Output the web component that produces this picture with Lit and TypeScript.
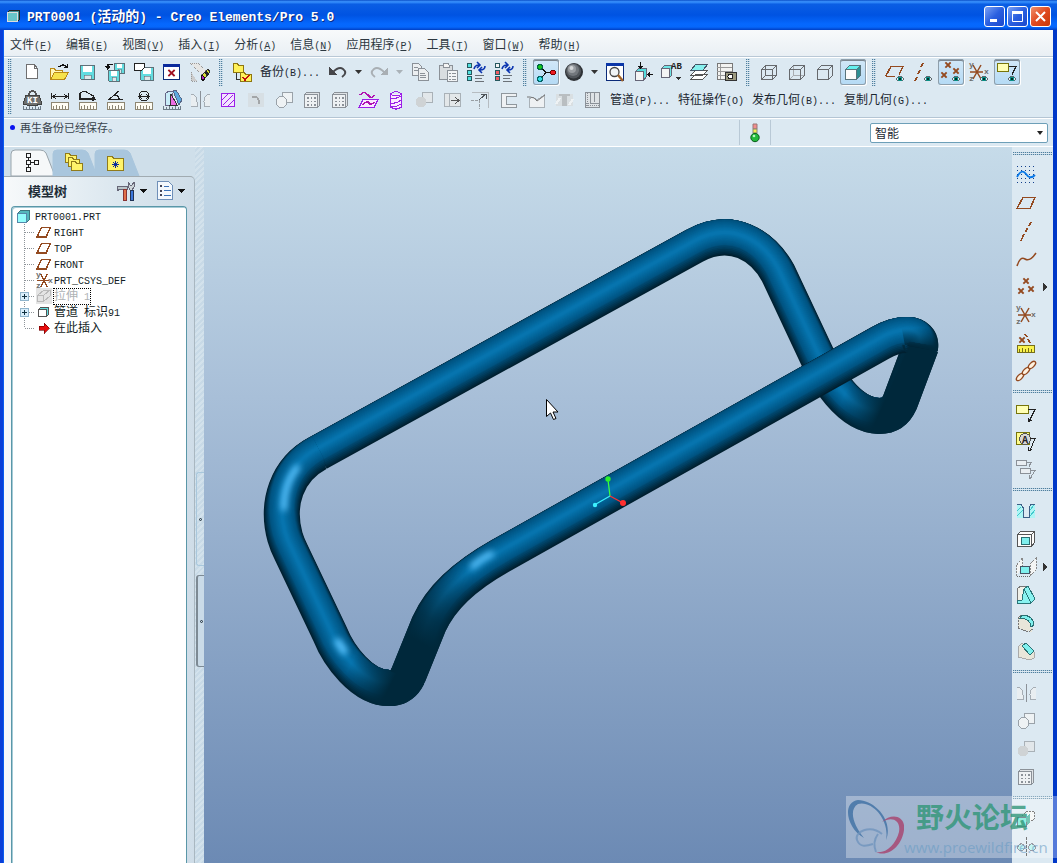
import { LitElement, html, svg, css, nothing } from "lit";
import { customElement, property } from "lit/decorators.js";
import { classMap } from "lit/directives/class-map.js";

/* ---------- shared glyph fragments ---------- */
const B = "#944a20";
const G = "#8b9198";
const P = "#9b1fe8";

const cross = (x: number, y: number, c = B, r = 2) =>
  svg`<path d="M${x - r} ${y - r}l${2 * r} ${2 * r}M${x + r} ${y - r}l${-2 * r} ${2 * r}" stroke=${c} stroke-width="1.800" stroke-linecap="square" fill="none" shape-rendering="auto"/>`;
const letter = (x: number, y: number, t: string, c = "#6c6c6c", s = 8) =>
  svg`<text x=${x} y=${y} font-family="Liberation Mono, monospace" font-size=${s} font-weight="700" fill=${c}>${t}</text>`;
const eye = svg`<path d="M10 17q5-6 10 0q-5 5-10 0z" fill="#5d6a70"/><path d="M11 17q4-3 8 0q-4 3-8 0z" fill="#e8eef0"/><circle cx="15" cy="17" r="2.200" fill="#0c8f86"/><circle cx="15" cy="17" r="1" fill="#00302c"/>`;
const ruler = (fill = "#fffdf4", stroke = "#8d8672") =>
  svg`<path d="M1.500 12.500h17v7h-17z" fill=${fill} stroke=${stroke}/><path d="M3.500 19v-3M6.500 19v-4M9.500 19v-3M12.500 19v-4M15.500 19v-3" stroke=${stroke}/>`;
const scale = svg`<path d="M1.500 16v4M1 19.500h18M4.500 17v3M7.500 16v4M10.500 17v3M13.500 16v4M16.500 17v3M18.500 16v4" stroke="#6d7c88" fill="none"/>`;
const disk = (x: number, y: number, s: number) =>
  svg`<path d="M${x + 0.5} ${y + 0.5}h${s}v${s}h${1 - s}l-1-1z" fill="#62dce0" stroke="#5e7078"/><path d="M${x + 3} ${y + 1}h${s - 5}v${s / 2 - 1}h${5 - s}z" fill="#fff"/><path d="M${x + 4} ${y + s - 4}h${s - 7}v4h${7 - s}z" fill="#dfe7ea" stroke="#5e7078" stroke-width=".6"/>`;
const cube = (stroke: string, front: string, top: string, side: string) =>
  svg`<path d="M2.500 7.500l4-4h11v10l-4 4h-11z" fill=${top} stroke=${stroke}/><path d="M2.500 7.500h11v10h-11z" fill=${front} stroke=${stroke}/><path d="M13.500 7.500l4-4v10l-4 4z" fill=${side} stroke=${stroke}/>`;
const csys = (ox: number, oy: number) =>
  svg`<path d="M${ox - 7} ${oy}h13M${ox - 4} ${oy - 7}l8 14M${ox + 4} ${oy - 7}l-8 14" stroke=${B} stroke-width="1.500" fill="none" shape-rendering="auto"/>`;
const grid = svg`<path d="M2.500 4.500l2-2h13v13l-2 2h-13z" fill="#dfe3e6" stroke=${G}/><path d="M2.500 4.500h13v13h-13z" fill="#eef1f3" stroke=${G}/><path d="M5 8h9M5 11.500h9M5 15h9" stroke=${G} stroke-width="1.500" stroke-dasharray="1.500 2"/>`;
const mirrorGrey = svg`<path d="M10.500 1v18" stroke=${G}/><path d="M1 4.500q6 0 6 7v5H1M20 4.500q-6 0-6 7v5h6" fill="#e9eef1" stroke="#a5adb4"/>`;
const merge = svg`<path d="M8.500 2.500h10v10h-10z" fill="#eef2f4" stroke="#9aa2a9"/><circle cx="7.500" cy="12" r="5.500" fill="#eef2f4" stroke="#9aa2a9"/>`;
const mergeFilled = svg`<path d="M8.500 2.500h10v10h-10z" fill="#e2e7ea" stroke="#a9b1b7"/><circle cx="7" cy="12" r="5.500" fill="#cfd3d5"/>`;
const treeBox = (color: string, first = color) =>
  svg`<path d="M1.500 1.500h4v4h-4z" fill=${first} stroke="#27585f"/><path d="M1.500 8.500h4v4h-4zM1.500 14.500h4v4h-4z" fill=${color} stroke="#27585f"/><path d="M9 13.500h9M9 16.500h7M9 19.500h9" stroke="#6b7177"/><path d="M8 7q1-4 5-4M11 0l3 3-3 3M19 4q0 4-5 4M16 5l-3 3 3 3" stroke="#0b35b0" stroke-width="1.600" fill="none" shape-rendering="auto"/>`;
const note = svg`<path d="M.5 3.500h12v8h-12z" fill="#ffffb4" stroke="#77750c" stroke-width="1.200"/>`;
const link = (x: number, y: number) =>
  svg`<ellipse cx=${x} cy=${y} rx="4.500" ry="2.300" transform=${`rotate(-45 ${x} ${y})`} fill="#fff2df" stroke=${B} stroke-width="1.400"/>`;

const icons: Record<string, unknown> = {
  "new": svg`<path d="M4.500 2.500h8l3 4v10h-11z" fill="#fff" stroke="#6f6f70"/><path d="M12.500 2.500v4h3" fill="none" stroke="#6f6f70"/>`,
  open: svg`<path d="M.5 17V6.500h4l1 2h7v3" fill="#fff7b8" stroke="#b98a17"/><path d="M.5 17.500l4-7h14l-4 7z" fill="#f6e24c" stroke="#b98a17"/><path d="M9 5q4-4 8 0M17.500 1.500v4h-4" fill="none" stroke="#111" stroke-width="1.400"/>`,
  save: disk(2, 3, 14),
  saveas: svg`${disk(8, 1, 10)}${disk(2, 8, 11)}<path d="M7 2.500H2v3M0 4l2 3 2-3" stroke="#111" fill="none" stroke-width="1.400"/>`,
  backup: svg`${disk(6, 5, 13)}<path d="M.5 1.500h10v4l-3 3h-7z" fill="#fff" stroke="#222"/>`,
  closewin: svg`<path d="M1.500 2.500h16v15h-16z" fill="#fff" stroke="#0b2a78"/><path d="M1 2h17v3H1z" fill="#0b2a9c"/>${cross(9.5, 11, "#a01020", 2.5)}`,
  erase: svg`<path d="M0 1h8l9 9-4 4z" fill="#e6e6e4" stroke="#999" stroke-dasharray="1 1"/><path d="M1 10v9h6" fill="#ccc" stroke="#999" stroke-dasharray="1 1"/><path d="M18 7l2 3-5 6-3-3z" fill="#d7dd3a" stroke="#333"/><path d="M12 13l3 3-2 3-2-3z" fill="#b322b8" stroke="#111"/><path d="M16 9l3 3-2 2-3-3z" fill="#222"/>`,
  folders: svg`<path d="M1.500 1.500h4l1 2h5v7h-10z" fill="#fff15a" stroke="#8f7610"/><path d="M4 11v6h4" stroke="#333" fill="none"/><path d="M8.500 10.500h4l1 2h6v7h-11z" fill="#fff15a" stroke="#8f7610"/><path d="M11 15l2 3 4-5" stroke="#c01010" fill="none" stroke-width="1.600"/>`,
  undo: svg`<path d="M1 5v8h8z" fill="#46464a"/><path d="M5 10q6-6 10-3q5 4-1 8" stroke="#46464a" stroke-width="2" fill="none" shape-rendering="auto"/>`,
  redo: svg`<path d="M19 5v8h-8z" fill="#a9afb4"/><path d="M15 10q-6-6-10-3q-5 4 1 8" stroke="#a9afb4" stroke-width="2" fill="none" shape-rendering="auto"/>`,
  copy: svg`<path d="M2.500 1.500h6l3 3v9h-9z" fill="#eceff1" stroke=${G}/><path d="M8.500 6.500h6l4 4v8h-10z" fill="#eceff1" stroke=${G}/><path d="M4 5.500h4M4 8.500h4M10 11.500h5M10 13.500h6M10 15.500h6" stroke=${G}/>`,
  paste: svg`<path d="M1.500 3.500h13v14h-13z" fill="#d9dde0" stroke=${G}/><path d="M5 3l1-2h4l1 2v2H5z" fill="#f4f4f4" stroke=${G}/><path d="M9.500 8.500h10v11h-10z" fill="#f2f4f6" stroke=${G}/><path d="M11 11.500h2M14 11.500h4M11 14.500h2M14 14.500h4M11 17.500h2M14 17.500h4" stroke=${G}/>`,
  regen: treeBox("#4fe0de"),
  regenman: treeBox("#ef5b62", "#f4f4f4"),
  spin: svg`<path d="M5 5l5 5.500h7M10 10.500l-5 6" stroke="#111" fill="none" stroke-width="1.200"/><circle cx="4" cy="5" r="2.400" fill="#13c51b" stroke="#064"/><circle cx="17" cy="10.500" r="2.400" fill="#ee1c24" stroke="#700"/><circle cx="4" cy="17" r="2.400" fill="#34dce4" stroke="#066"/>`,
  sphere: svg`<g shape-rendering="auto"><circle cx="10" cy="10" r="9" fill="#2e3236"/><circle cx="9.500" cy="9" r="7.600" fill="#51565b"/><circle cx="9" cy="8" r="6" fill="#72777c"/><circle cx="8" cy="7" r="4" fill="#9a9ea2"/><circle cx="7.500" cy="6" r="2" fill="#d4d6d8"/></g>`,
  refit: svg`<path d="M1.500 1.500h17v17h-17z" fill="#fff" stroke="#0b2a78"/><path d="M1 1h18v3H1z" fill="#0b36a8"/><g shape-rendering="auto"><circle cx="9.500" cy="10" r="4.500" fill="#f1f5f7" stroke="#444" stroke-width="1.300"/><path d="M13 13l5 6" stroke="#a0642a" stroke-width="2.400"/></g>`,
  reorient: svg`<path d="M2.500 9.500l3-3h8v8l-3 4h-8z" fill="#56dede" stroke="#667"/><path d="M2.500 9.500h8v9h-8z" fill="#f4f4f4" stroke="#667"/><path d="M7.500 0v6M20 12.500h-6" stroke="#111"/><path d="M4.500 4h6l-3 3zM16.500 9.500v6l-3-3z" fill="#111"/>`,
  views: svg`<path d="M.5 6.500l3-3h7v10l-2 2h-8z" fill="#6fe6e6" stroke="#667"/><path d="M.5 6.500h8v9h-8z" fill="#f4f4f4" stroke="#667"/>${letter(10, 7, "AB", "#222", 9)}<path d="M14 15h6l-3 3z" fill="#333"/>`,
  layers: svg`<path d="M2 17l5-5h12l-5 5zM2 13l5-5h12l-5 5z" fill="#fff" stroke="#555"/><path d="M2 8l5-6h12l-5 6z" fill="#86f0ee" stroke="#456"/>`,
  viewmgr: svg`<path d="M.5 1.500h15v16H.5z" fill="#f3f3f1" stroke="#777"/><path d="M3.500 2v15M0 5.500h15M0 9.500h15M0 13.500h15" stroke="#999"/><path d="M8 10.500h11v8H8z" fill="#9c9a80" stroke="#333"/><circle cx="13.500" cy="14.500" r="2.500" fill="#fff" stroke="#222"/>`,
  wire: svg`<path d="M2.500 7.500h11v10h-11zM6.500 3.500h11v10h-11zM2.500 7.500l4-4M13.500 7.500l4-4M2.500 17.500l4-4M13.500 17.500l4-4" fill="none" stroke="#66696d"/>`,
  hidden: svg`<path d="M6.500 3.500v10h11M6.500 13.500l-4 4" stroke="#a9adb2" fill="none"/><path d="M2.500 7.500h11v10h-11zM2.500 7.500l4-4h11v10l-4 4M13.500 7.500l4-4" fill="none" stroke="#66696d"/>`,
  nohidden: svg`<path d="M2.500 7.500h11v10h-11zM2.500 7.500l4-4h11v10l-4 4M13.500 7.500l4-4" fill="none" stroke="#66696d"/>`,
  shaded: cube("#58747c", "#fcfcfb", "#62f0ee", "#2d8f92"),
  planeeye: svg`<path d="M.5 14.500L6 4.500h12l-4 8M.5 14.500h9" fill="none" stroke=${B} stroke-width="1.500"/>${eye}`,
  axiseye: svg`<path d="M10 1l-2 4M7 8l-2 4M4 15l-2 4" stroke=${B} stroke-width="1.800"/>${eye}`,
  pointeye: svg`${cross(7, 3)}${cross(15, 9)}${cross(3, 13)}${eye}`,
  csyseye: svg`${csys(8, 10)}${letter(0, 5, "y")}${letter(15, 12, "x")}${letter(0, 19, "z")}${eye}`,
  noteeye: svg`<path d="M.5 1.500h11v8h-11z" fill="#ffffb4" stroke="#77750c" stroke-width="1.200"/><path d="M12 4.500h7l-4 8" stroke="#222" fill="none"/>${eye}`,

  weight: svg`<path d="M4 5h13l3 9q-10 3-19 0z" fill="#6e706f" stroke="#3f4141"/><path d="M7 5q0-4 3.500-4T14 5" fill="none" stroke="#555" stroke-width="1.600"/>${letter(5, 13, "KI", "#fff", 9)}${scale}`,
  distance: svg`<path d="M1.500 3v6M18.500 3v6M2 6.500h16M6 4L3 6.500 6 9M14 4l3 2.500L14 9" stroke="#222" fill="none"/>${ruler()}`,
  area: svg`<path d="M2 9V3q5-3 8 0q7 3 7 6zM2 9h15M14 7l3 2-3 2" stroke="#222" fill="none" stroke-width="1.200"/>${ruler()}`,
  angle: svg`<path d="M13 1L3 9.500h14M9 5q4 1 4 4" stroke="#222" fill="none" stroke-width="1.200"/>${ruler()}`,
  diameter: svg`<circle cx="10" cy="6" r="5" fill="none" stroke="#222"/><path d="M4 6.500h12M8 4.500L5 6.500l3 2M12 4.500l3 2-3 2" stroke="#222" fill="none"/>${ruler()}`,
  section: svg`<path d="M3 4l4-3h6l-3 3v11H3z" fill="#c9ecf8" stroke="#668"/><path d="M9 4l6 11H8z" fill="#ee6ee4" stroke="#333"/><path d="M11 1l3-1 6 10-3 5z" fill="#5aa9dd" stroke="#568"/>${scale}`,
  mirror: mirrorGrey,
  hatch: svg`<path d="M3.500 3.500h13v13h-13z" fill="#f3e4ff" stroke=${P} stroke-width="1.400"/><path d="M4 10l6-6M5 15L15 5M10 16l6-6" stroke=${P} shape-rendering="auto"/>`,
  blend: svg`<path d="M2 3h16v14H2z" fill="#d7dfe4"/><path d="M6 7q7-2 7 7" stroke="#a3a6a8" stroke-width="2" fill="none"/>`,
  merge,
  grid,
  surf: svg`<path d="M2 5q4-5 8 0t6 0" stroke="#b012b0" fill="none" stroke-width="1.500"/><path d="M5 9.500h15l-4 8H1z" fill="#fbe9ff" stroke=${P} stroke-width="1.300"/><path d="M5 15q4-5 6-2t5-1" stroke="#b012b0" fill="none" stroke-width="1.500"/>`,
  cyl: svg`<path d="M4.500 4v13q6 4 11 0V4" fill="#fbe9ff" stroke=${P} stroke-width="1.300"/><path d="M4.500 4q5.500-5 11 0q-5.500 4-11 0zM5 9q5 0 10-3M5 13q6 1 10-3M5 17q6 0 10-3" fill="none" stroke=${P}/>`,
  mergef: mergeFilled,
  extend: svg`<path d="M2 3.500h16v13H2z" fill="#e3e7e9" stroke="#a9b1b7"/><path d="M7.500 4v13" stroke="#a9b1b7"/><path d="M9 10.500h7M13 7l4 3.500-4 3.500" stroke="#555" fill="none"/>`,
  offset: svg`<path d="M2 2.500h16.500V18" fill="none" stroke="#b6bcc1" stroke-width="1.500"/><path d="M1 10h8v9" stroke="#999fa4" fill="none" stroke-dasharray="3 1"/><path d="M9 10l7-6M11 4h5v5" stroke="#4f555a" fill="none"/>`,
  thick: svg`<path d="M3.500 3.500h15v3h-10v8h10v3h-15z" fill="#eef1f3" stroke="#8f979d"/>`,
  solid: svg`<path d="M3.500 17.500V9q4-3 7 1l8-5v12.500z" fill="#eef1f3" stroke="#a9b1b7"/><path d="M1 7h3q5 0 7 4l8-6" stroke="#777" fill="none" shape-rendering="auto"/>`,
  hole: svg`<path d="M2 4h17v12H2z" fill="#d9dfe2"/><path d="M2 14l4-6M15 15l4-6" stroke="#eef2f4" stroke-width="2"/><path d="M5 4h11v2h-3v10H8V6H5z" fill="#b9bec1"/>`,
  rib: svg`<path d="M3.500 2.500h14v15h-14z" fill="#dfe3e6" stroke=${G}/><path d="M8.500 3v10h9M12.500 3v9" stroke=${G} fill="none"/><path d="M4 13h4M4 15h13M5.500 3v14" stroke=${G} stroke-dasharray="1 1"/>`,

  sketch: svg`<path d="M1 1.500h18M1 5.500h18M1 9.500h18M1 13.500h18M1 17.500h18" stroke="#123f8c" stroke-dasharray="1 3"/><path d="M1 12q5-9 9-3t9 1" stroke="#0878e8" stroke-width="1.800" fill="none" shape-rendering="auto"/>`,
  plane: svg`<path d="M1 15.500L7 4.500h12l-5 11z" fill="none" stroke=${B} stroke-width="1.500"/>`,
  axis: svg`<path d="M15 1l-2 4M11.500 7l-2 4M8 13l-3 7" stroke=${B} stroke-width="1.600"/>`,
  curve: svg`<path d="M1 17q3-10 8-7q5 3 11-6" fill="none" stroke=${B} stroke-width="1.500" shape-rendering="auto"/>`,
  points: svg`${cross(10, 4)}${cross(5, 14)}${cross(15, 12)}`,
  csys: svg`${csys(9, 10)}${letter(0, 5, "y")}${letter(15, 12, "x")}${letter(0, 19, "z")}`,
  ruler: svg`${cross(6, 7)}<path d="M9 1l2 3M12 6l2 4" stroke=${B} stroke-width="1.500"/>${ruler("#faf34c", "#77701a")}`,
  chain: svg`<g shape-rendering="auto">${link(4, 16)}${link(10, 10)}${link(16, 4)}</g>`,
  note1: svg`<path d="M.5 2.500h12v8H.5z" fill="#ffffb4" stroke="#77750c"/><path d="M12 6.500h7l-6 12M12 15v4l4-2" stroke="#222" fill="none"/>`,
  note2: svg`<path d="M.5 1.500h13v12H.5z" fill="#fffc8c" stroke="#77750c"/><circle cx="9" cy="8" r="5.500" fill="#d7d7d3" stroke="#555"/>${letter(6, 12, "A", "#222", 10)}<path d="M14 7.500h5l-5 12M12 16v4l4-2" stroke="#222" fill="none"/>`,
  note3: svg`<path d="M.5 1.500h10v5H.5zM4.500 9.500h10v5h-10z" fill="#e9eef2" stroke=${G}/><path d="M11 3.500h4l-2 4M15 11.500h4l-5 8M13 16v4l3-2" stroke=${G} fill="none"/>`,
  hole2: svg`<path d="M1 4h4l3 3v10H1zM19 4h-4l-2 3v10h6z" fill="#aef5f5"/><path d="M1 10l4-4M1 15l6-6M14 15l5-6M14 9l4-5" stroke="#41c8cc"/><path d="M1 3.500h4l2 3v10h6v-10l2-3h4" stroke="#3c5f86" fill="none"/>`,
  shell: svg`<path d="M1.500 5.500l3-3h14v11l-3 4h-14z" fill="#fdfdfc" stroke="#555"/><path d="M1.500 5.500h14v12h-14M15.500 5.500l3-3" fill="none" stroke="#555"/><path d="M5 8h8v7H5z" fill="#7ff0ee" stroke="#2a6f73"/>`,
  ribs: svg`<path d="M.5 19V8l6-7v8M20 1l-6 6v12l6-6z" fill="#f4f5f4" stroke="#888" stroke-dasharray="2 1"/><path d="M4 9h9v7H4z" fill="#7ff0ee" stroke="#456"/><path d="M1 19.500h13" stroke="#666" stroke-dasharray="1 1"/>`,
  draft: svg`<path d="M1 4l4-3h6l-3 3v12H1z" fill="#f0f0e8" stroke="#777"/><path d="M8 4l4-3 7 13-4 4H1v-3h5z" fill="#89f3f1" stroke="#2a7478"/><path d="M8 4l7 14" stroke="#2a7478"/>`,
  round: svg`<path d="M2 5l4-3 9 8 1 5v4l-14-4z" fill="#e8e6da"/><path d="M2 15V5l4-3M2 15l11 4 5-4" stroke="#777" fill="none" stroke-dasharray="2 1"/><path d="M6 2q11 0 12 10l-3 2Q14 5 4 5z" fill="#7ff0ee" stroke="#2a6f73"/>`,
  chamfer: svg`<path d="M2 6l4-4 12 9v6l-4 2-12-3z" fill="#e8e6da" stroke="#aaa"/><path d="M6 5l4-3 8 8-4 4z" fill="#7ff0ee" stroke="#2a6f73"/>`,
  copygeom: svg`<path d="M6 7l5-5h7v8l-6 4" fill="#f2f5f4" stroke="#444" stroke-dasharray="2 1"/><path d="M1.500 8.500h9v9h-9z" fill="#5fe8d2" stroke="#456"/><path d="M10 8l4-3v8l-3 4z" fill="#2fa890"/>`,
  shrink: svg`<path d="M10.500 0v20" stroke="#333" stroke-dasharray="3 1"/><path d="M1 11q4-8 8-1q-3 7-8 1zM20 11q-4-8-8-1q3 7 8 1z" fill="#a7f4ee" stroke="#667"/>`,
};

const latin = (t: string, key = "") =>
  t.split(/([\x20-\x7e]+)/).filter(Boolean).map((p) => {
    if (!/[\x20-\x7e]/.test(p[0])) return p;
    const i = key ? p.indexOf(key) : -1;
    return html`<span class="en">${i < 0 ? p : html`${p.slice(0, i)}<u>${key}</u>${p.slice(i + 1)}`}</span>`;
  });

const base = css`
  * { box-sizing: border-box; }
  .en { font-family: "Liberation Mono", monospace; font-size: 10px; white-space: pre; }
  button { font: inherit; color: inherit; border: 0; background: none; padding: 0; margin: 0; }
`;

/* ---------- toolbar button ---------- */
@customElement("tool-button")
class ToolButton extends LitElement {
  @property() icon = "";
  @property() label = "";
  @property({ type: Boolean }) pressed = false;
  @property({ type: Boolean }) flyout = false;
  static styles = [base, css`
    :host { display: block; flex: none; }
    .row { display: flex; align-items: center; }
    .b { width: 26px; height: 26px; margin: 1px; display: grid; place-items: center; border-radius: 3px; }
    .on { background: linear-gradient(#d3e8f8, #b4daf5); box-shadow: inset 0 0 0 1px #8f9fab, inset 0 2px #7c8791, 1px 1px #fff; }
    svg { display: block; shape-rendering: crispEdges; overflow: visible; }
    .fly { margin-left: 3px; }
  `];
  render() {
    return html`<div class="row">
      <button class=${classMap({ b: true, on: this.pressed })} aria-label=${this.label || this.icon} aria-pressed=${this.pressed}>
        <svg width="20" height="20" viewBox="0 0 20 20" fill="none">${icons[this.icon]}</svg>
      </button>
      ${this.flyout ? html`<svg class="fly" width="5" height="8"><path d="M0 0l5 4-5 4z" fill="#333" /></svg>` : nothing}
    </div>`;
  }
}

/* ---------- model tree ---------- */
interface Node { icon: string; text: string; state?: string; plus?: boolean; }
const nodes: Node[] = [
  { icon: "plane", text: "RIGHT" },
  { icon: "plane", text: "TOP" },
  { icon: "plane", text: "FRONT" },
  { icon: "csys", text: "PRT_CSYS_DEF" },
  { icon: "extrude", text: "拉伸 1", state: "dim", plus: true },
  { icon: "pipe", text: "管道 标识91", plus: true },
  { icon: "insert", text: "在此插入" },
];
const treeIcons: Record<string, unknown> = {
  plane: svg`<path d="M1 13L5.500 3.500h9L10 13z" fill="none" stroke=${B} stroke-width="1.500"/>`,
  csys: svg`<path d="M1 8.500h12M5 2l6 13M11 2L5 15" stroke=${B} stroke-width="1.400"/>${letter(0, 5, "y")}${letter(12, 11, "x")}${letter(0, 16, "z")}`,
  extrude: svg`<path d="M0 0h16v16H0z" fill="#e4e4e4"/><path d="M1.500 7.500h6v6h-6zM2 7l6-5h6v6l-6 5M8 7l6-5" stroke="#b9b9b9" fill="none"/>`,
  pipe: svg`<path d="M2.500 5.500l2-2h8v7l-2 2h-8z" fill="#62dede" stroke="#555"/><path d="M2.500 5.500h8v7h-8z" fill="#fff" stroke="#555"/>`,
  insert: svg`<path d="M3 6h5V2.500L13.500 8 8 13.500V10H3z" fill="#e80c0c" stroke="#600" stroke-width=".6"/>`,
  root: svg`<path d="M.5 4.500l3-3h9v9l-3 3h-9z" fill="#53b8bc" stroke="#3c767c"/><path d="M.5 4.500h9v9h-9z" fill="#93fdfc" stroke="#58a"/>`,
};

@customElement("model-tree")
class ModelTree extends LitElement {
  static styles = [base, css`
    :host { display: flex; flex-direction: column; width: 191px; flex: none; font: 12px "Noto Sans CJK SC", sans-serif; color: #111c24; }
    svg { display: block; shape-rendering: crispEdges; overflow: visible; }
    .tabs { display: flex; height: 29px; padding: 3px 0 0 7px; }
    .tab { width: 42px; height: 26px; display: grid; }
    .tab svg { grid-area: 1 / 1; }
    .tab .shape { shape-rendering: auto; }
    .body { flex: 1; display: flex; flex-direction: column; border-top: 1px solid #a1abb1; border-right: 1px solid #a9b7c0; border-top-right-radius: 5px; padding: 0 7px; background: linear-gradient(90deg, #f7f9fa, #dbe7ef 60%, #cfdde8); }
    .head { height: 29px; display: flex; align-items: center; gap: 9px; padding: 0 2px 2px 17px; }
    h2 { font-size: 13px; line-height: 16px; margin: 0 auto 0 0; color: #222e38; }
    .head button { display: flex; align-items: center; gap: 4px; }
    .list { flex: 1; margin: 0; padding: 1px 0 0 5px; list-style: none; background: #fff; border: 1px solid #5a97a8; border-bottom: 0; border-radius: 4px 4px 0 0; box-shadow: inset 1px 1px #a6cbd6; }
    .list li { display: flex; align-items: center; height: 16px; line-height: 16px; white-space: nowrap; gap: 3px; }
    .list .node { gap: 2px; }
    .tx { height: 15px; line-height: 12px; }
    .dim { color: #aeb2b5; outline: 1px dotted #000; }
  `];
  render() {
    const folder = (x: number, y: number) => svg`<path d="M${x}.5 ${y}.5h4l1 2h6v7h-11z" fill="#fff36a" stroke="#907b1b"/>`;
    const tab = (fill: string, stroke: string, inner: unknown, name: string) => html`
      <button class="tab" aria-label=${name}>
        <svg class="shape" width="46" height="26"><path d="M0 26V4q0-4 4-4h25q4 0 6 3l9 23z" fill=${fill} stroke=${stroke}/></svg>
        <svg width="42" height="26" fill="none">${inner}</svg>
      </button>`;
    const down = html`<svg width="7" height="4"><path d="M0 0h7L3.500 4z" fill="#111"/></svg>`;
    return html`
      <div class="tabs">
        ${tab("#f6f8f9", "#9aa5ac", svg`<path d="M15.500 3.500h4v4h-4zM15.500 10.500h4v4h-4zM15.500 17.500h4v4h-4zM23.500 10.500h4v4h-4zM17.500 8v2M17.500 15v2M20 12.500h3" stroke="#222"/>`, "模型树")}
        ${tab("#a9c6dd", "#a9c6dd", svg`${folder(12, 3)}${folder(15, 7)}${folder(18, 11)}`, "文件夹")}
        ${tab("#a9c6dd", "#a9c6dd", svg`<path d="M12.500 6.500h5l1 2h10v12h-16z" fill="#fff36a" stroke="#907b1b"/><path d="M20.500 11v7M17 14.500h7M18 12l5 5M23 12l-5 5" stroke="#0b2a9c"/>`, "收藏夹")}
      </div>
      <div class="body">
        <div class="head">
          <h2>模型树</h2>
          <button aria-label="设置"><svg width="19" height="20"><path d="M0 5h10v3H3l-3 2z" fill="#b9c4c8" stroke="#667"/><path d="M6 8h3v11H6z" fill="#e0704a" stroke="#833"/><path d="M11 1l2 3h2l2-3 1 4-3 4h-2l-2-4z" fill="#ccd4d8" stroke="#667"/><path d="M13 9h3v10h-3z" fill="#3d78dc" stroke="#235"/></svg>${down}</button>
          <button aria-label="显示"><svg width="18" height="20" fill="none"><path d="M1.500.5h11l4 4v14h-15z" fill="#f3f8fd" stroke="#6f8fb8"/><path d="M4 5h2M4 9.500h2M4 14h2" stroke="#445" stroke-width="2"/><path d="M7.500 5.500h5M7.500 9.500h7M7.500 14.500h7" stroke="#3b72b8"/></svg>${down}</button>
        </div>
        <ul class="list">
          <li><svg width="15" height="15">${treeIcons.root}</svg><span class="tx">${latin("PRT0001.PRT")}</span></li>
          ${nodes.map((n, i) => html`<li class="node">
            <svg width="17" height="16" fill="none">
              <path d=${`M7.500 0v${i === nodes.length - 1 ? 8 : 16}M8 8.500h10`} stroke="#8e9499" stroke-dasharray="1 1"/>
              ${n.plus ? svg`<path d="M3.500 4.500h8v8h-8z" fill="#d8eefc" stroke="#8fb4cc"/><path d="M5 8.500h5M7.500 6v5" stroke="#103040"/>` : nothing}
            </svg>
            <svg width="16" height="16">${treeIcons[n.icon]}</svg>
            <span class="tx ${n.state ?? ""}">${latin(n.text)}</span>
          </li>`)}
        </ul>
      </div>`;
  }
}

/* ---------- shaded model view ---------- */
const BACK = "M318 453L694 246C732 225 763 246 778 273L817 356C826 376 848 415 879 416C890 416 896 411 900 402L921 346";
const LOOP = "M318 453C286 470 276 504 285 537Q287 544 291 552L330 634C338 654 362 690 392 688C401 687 405 682 408 676";
const FRONT = "M408 676L429 624C441 598 463 577 500 556L880 343C899 332 923 331 920 348";

const mix = (a: number[], b: number[], t: number) => `rgb(${a.map((v, i) => Math.round(v + (b[i] - v) * t)).join()})`;
const layers = Array.from({ length: 21 }, (_, i) => {
  const t = i / 20;
  const w = 36 - 33 * t;
  return {
    w,
    dy: -Math.min((36 - w) / 2, 5),
    c: t < 0.35 ? mix([0, 32, 48], [0, 84, 130], t / 0.35) : mix([0, 84, 130], [7, 116, 174], (t - 0.35) / 0.65),
  };
});
const tube = (d: string) => layers.map((l) => svg`<path d=${d} transform=${`translate(0 ${l.dy})`} stroke=${l.c} stroke-width=${l.w}/>`);

@customElement("model-view")
class ModelView extends LitElement {
  static styles = css`
    :host { display: block; flex: 1; min-width: 0; background: linear-gradient(#c6dbe9, #a8bfd8 35%, #6c8ab4); overflow: hidden; }
    svg { display: block; width: 100%; height: 100%; }
  `;
  render() {
    return html`<svg viewBox="204 147 808 716" fill="none" role="img" aria-label="PRT0001">
      <defs>
        <linearGradient id="legL" gradientUnits="userSpaceOnUse" x1="425" y1="645" x2="468" y2="570">
          <stop offset="0" stop-color="#00283b"/><stop offset=".3" stop-color="#00283b" stop-opacity=".8"/><stop offset="1" stop-color="#00283b" stop-opacity="0"/>
        </linearGradient>
        <linearGradient id="turnL" gradientUnits="userSpaceOnUse" x1="352" y1="662" x2="392" y2="682">
          <stop offset="0" stop-color="#00283b" stop-opacity="0"/><stop offset="1" stop-color="#00283b"/>
        </linearGradient>
        <linearGradient id="turnR" gradientUnits="userSpaceOnUse" x1="846" y1="392" x2="882" y2="408">
          <stop offset="0" stop-color="#00283b" stop-opacity="0"/><stop offset="1" stop-color="#00283b"/>
        </linearGradient>
        <linearGradient id="endR" gradientUnits="userSpaceOnUse" x1="910" y1="328" x2="911" y2="350">
          <stop offset="0" stop-color="#00283b" stop-opacity="0"/><stop offset="1" stop-color="#00283b"/>
        </linearGradient>
        <filter id="soft" x="-50%" y="-50%" width="200%" height="200%"><feGaussianBlur stdDeviation="3"/></filter>
      </defs>
      ${tube(BACK)}
      <path d="M817 356C826 376 848 415 879 416C890 416 896 411 900 402L921 346" stroke="url(#turnR)" stroke-width="36"/>
      ${tube(LOOP)}
      <path d="M330 634C338 654 362 690 392 688C401 687 405 682 408 676" stroke="url(#turnL)" stroke-width="36"/>
      ${tube(FRONT)}
      <path d="M407 678L429 624C441 598 463 577 500 556" stroke="url(#legL)" stroke-width="36"/>
      <path d="M903 335C914 333 922 338 920 348" stroke="url(#endR)" stroke-width="36"/>
      <g filter="url(#soft)" stroke="#5cc4ff" stroke-linecap="round">
        <path d="M297 468Q284 484 284 508" stroke-width="6"/>
        <path d="M473 566Q482 558 491 554" stroke-width="6"/>
        <path d="M338 642L344 651" stroke-width="7"/>
      </g>
      <path d="M610 496L608 480" stroke="#3cff3c" stroke-width="1.300"/>
      <path d="M610 496L596 504" stroke="#3cf0ff" stroke-width="1.300"/>
      <path d="M610 496L623 503" stroke="#ff3030" stroke-width="1.300"/>
      <circle cx="608" cy="479" r="2.700" fill="#2cf02c"/><circle cx="595" cy="505" r="2.200" fill="#3cf0ff"/><circle cx="623" cy="503" r="3" fill="#ff3030"/>
      <path d="M546.500 399.500v17l4-3.500 3 6.500 2.500-1-3-6.500h5z" fill="#fff" stroke="#000"/>
    </svg>`;
  }
}

/* ---------- application window ---------- */
const menus: [string, string][] = [["文件", "F"], ["编辑", "E"], ["视图", "V"], ["插入", "I"], ["分析", "A"], ["信息", "N"], ["应用程序", "P"], ["工具", "T"], ["窗口", "W"], ["帮助", "H"]];
const measure = "weight distance area angle diameter section mirror hatch blend merge grid grid surf cyl mergef extend offset thick solid hole rib".split(" ");
const side = [
  "sketch plane axis curve points csys ruler chain".split(" "),
  "note1 note2 note3".split(" "),
  "hole2 shell ribs draft round chamfer".split(" "),
  "mirror merge mergef grid".split(" "),
  "copygeom shrink".split(" "),
];
const btn = (icon: string, pressed = false) => html`<tool-button icon=${icon} ?pressed=${pressed}></tool-button>`;
const drop = (off = false) => html`<svg class="drop" width="7" height="4"><path d="M0 0h7L3.500 4z" fill=${off ? "#aab2b8" : "#333"}/></svg>`;

@customElement("app-root")
class AppRoot extends LitElement {
  static styles = [base, css`
    :host { display: flex; flex-direction: column; height: 100vh; overflow: hidden; position: relative; font: 12px/16px "Noto Sans CJK SC", sans-serif; color: #1b2731; background: #0a3fd8; }
    .title { flex: none; height: 30px; display: flex; align-items: center; gap: 6px; padding: 2px 6px 0 7px; color: #fff; background: linear-gradient(#0b50c8, #3b94ff 6%, #0a5ee4 14%, #0053e2 50%, #0568fe 80%, #0667fb 90%, #003fc4); }
    h1 { flex: 1; margin: 0; font-size: 14px; line-height: 20px; text-shadow: 1px 1px #0a2a80; }
    h1 .en { font-size: 13px; }
    .win { width: 21px; height: 21px; border: 1px solid #fff; border-radius: 3px; background: linear-gradient(135deg, #7ba2f5, #2a5fe0 50%, #1c48cc); margin-left: -4px; display: grid; place-items: center; }
    .close { background: linear-gradient(135deg, #f0906c, #e04a20 50%, #c83808); }
    .frame { flex: 1; min-height: 0; display: flex; flex-direction: column; margin: 0 4px; background: #dce9f2; box-shadow: 4px 0 #0038c8, -1px 0 #0a5cf0; }
    nav { flex: none; height: 27px; display: flex; align-items: center; gap: 14px; padding: 4px 6px 0; background: linear-gradient(#f8fafb, #e9eff4); border-bottom: 1px solid #b9c8d6; color: #2c3740; }
    .tools { flex: none; display: flex; height: 61px; border-bottom: 1px solid #b4c5d4; box-shadow: 0 1px #fff, inset 0 1px #fff; padding: 1px 4px 0; gap: 6px; }
    .rows { display: flex; flex-direction: column; flex: 1; min-width: 0; }
    .row { display: flex; align-items: center; height: 28px; white-space: nowrap; }
    .grip, .hgrip { flex: none; width: 4px; height: 28px; background: repeating-linear-gradient(#dce9f2 0 1px, transparent 1px 2px), repeating-linear-gradient(90deg, #4f7f9e 0 1px, #b8cfdf 1px 2px); }
    .tall { height: 56px; }
    .row .grip { margin: 0 5px; }
    .txt { padding: 0 4px; }
    .drop { flex: none; margin: 0 3px; }
    .status { flex: none; height: 29px; display: flex; align-items: center; padding: 1px 5px 0 6px; border-bottom: 1px solid #fff; }
    .msg { flex: 1; margin: 0 0 11px; display: flex; align-items: center; gap: 5px; color: #38434c; font-size: 11px; }
    .dot { width: 5px; height: 5px; border-radius: 50%; background: #0a14f0; }
    .light { width: 32px; height: 25px; border: solid #b9c9d6; border-width: 0 1px; display: grid; place-items: center; margin-right: 99px; }
    .combo { display: grid; align-items: center; width: 178px; }
    .combo select { grid-area: 1 / 1; appearance: none; width: 100%; height: 20px; margin: 0; padding: 0 4px; font: inherit; color: #1b2731; background: #fff; border: 1px solid #6d9fb8; border-radius: 2px; }
    .combo svg { grid-area: 1 / 1; justify-self: end; margin-right: 5px; pointer-events: none; }
    main { flex: 1; min-height: 0; display: flex; background: #cfdfea; }
    .sash { flex: none; width: 9px; padding-top: 325px; display: flex; flex-direction: column; gap: 9px; background: repeating-linear-gradient(135deg, #d3e2ec 0 2px, #c8dae7 2px 4px); }
    .pull { width: 8px; height: 94px; margin-left: 1px; border: 1px solid #a8c7dc; border-right: 0; border-radius: 3px 0 0 3px; display: grid; place-items: center; }
    .pull i { width: 3px; height: 3px; border-radius: 50%; border: 1px solid #20303c; }
    .dark { height: 92px; border-color: #7d8a94; border-left-width: 2px; background: #cadbe8; }
    aside { flex: none; width: 41px; display: flex; flex-direction: column; background: #dce9f2; }
    .hgrip { width: auto; height: 4px; margin: 4px 1px 6px; }
    .mark { position: absolute; right: 0; bottom: 5px; width: 211px; height: 62px; background: #ffffff55; display: flex; pointer-events: none; }
    .mark svg { flex: none; }
    .words { display: flex; flex-direction: column; font-size: 28px; line-height: 41px; color: #2e9576cc; }
    .words b { padding-left: 12px; }
    .words span { font: 15px/21px "Noto Sans", sans-serif; color: #6a9cc499; }
  `];

  render() {
    return html`
      <header class="title">
        <svg width="14" height="14" shape-rendering="crispEdges"><path d="M.5 3.500l2-2h10v9l-2 2H.5z" fill="#3c8f98" stroke="#222"/><path d="M.5 3.500h10v9H.5z" fill="#68c5ca" stroke="#ddd"/></svg>
        <h1>${latin("PRT0001 (活动的) - Creo Elements/Pro 5.0")}</h1>
        <button class="win" aria-label="最小化"><svg width="13" height="13"><path d="M2 9h7v3H2z" fill="#fff"/></svg></button>
        <button class="win" aria-label="最大化"><svg width="13" height="13"><path d="M1.500 2v9.500h10V2z" fill="none" stroke="#fff"/><path d="M1 1h11v3H1z" fill="#fff"/></svg></button>
        <button class="win close" aria-label="关闭"><svg width="13" height="13"><path d="M2 2l9 9M11 2l-9 9" stroke="#fff" stroke-width="2"/></svg></button>
      </header>
      <div class="frame">
        <nav>${menus.map(([t, k]) => html`<button>${latin(`${t}(${k})`, k)}</button>`)}</nav>
        <div class="tools">
          <div class="grip tall"></div>
          <div class="rows">
            <div class="row">
              ${["new", "open", "save", "saveas", "backup", "closewin", "erase"].map((n) => btn(n))}
              <div class="grip"></div>
              ${btn("folders")}<button class="txt">${latin("备份(B)...")}</button>
              ${btn("undo")}${drop()}${btn("redo")}${drop(true)}${["copy", "paste", "regen", "regenman"].map((n) => btn(n))}
              <div class="grip"></div>
              ${btn("spin", true)}${btn("sphere")}${drop()}${["refit", "reorient", "views", "layers", "viewmgr"].map((n) => btn(n))}
              <div class="grip"></div>
              ${btn("wire")}${btn("hidden")}${btn("nohidden")}${btn("shaded", true)}
              <div class="grip"></div>
              ${btn("planeeye")}${btn("axiseye")}${btn("pointeye", true)}${btn("csyseye")}${btn("noteeye", true)}
            </div>
            <div class="row">
              ${measure.map((n) => btn(n))}
              ${["管道(P)...", "特征操作(O)", "发布几何(B)...", "复制几何(G)..."].map((t) => html`<button class="txt">${latin(t)}</button>`)}
            </div>
          </div>
        </div>
        <div class="status">
          <p class="msg"><span class="dot"></span>再生备份已经保存。</p>
          <div class="light"><svg width="10" height="20"><path d="M3 1h4v5H3z" fill="#f28c8c" stroke="#977"/><path d="M3 6h4v4H3z" fill="#f5ee50" stroke="#887"/><circle cx="5" cy="14.500" r="4.200" fill="#23b93c" stroke="#0a5c1c"/><circle cx="4" cy="13" r="1.300" fill="#b9f5c0"/></svg></div>
          <div class="combo">
            <select aria-label="过滤器"><option>智能</option></select>
            <svg width="6" height="4"><path d="M0 0h6L3 4z" fill="#222"/></svg>
          </div>
        </div>
        <main>
          <model-tree></model-tree>
          <div class="sash"><div class="pull"><i></i></div><div class="pull dark"><i></i></div></div>
          <model-view></model-view>
          <aside>
            ${side.map((g) => html`<div class="hgrip"></div>${g.map((n) => html`<tool-button icon=${n} ?flyout=${n === "points" || n === "ribs"}></tool-button>`)}`)}
          </aside>
        </main>
      </div>
      <div class="mark">
        <svg width="58" height="62" fill="none">
          <path fill-rule="evenodd" fill="#3d6fa3" opacity=".8" d="M40 44C48 24 28 4 12 4C-4 6 0 32 18 42C8 30 2 14 12 8C26 4 44 24 40 44z"/>
          <path fill="#a83a66" opacity=".75" d="M36 26C46 16 60 20 58 34C56 50 42 62 30 56C40 58 50 48 53 36C55 24 46 20 36 26z"/>
          <path d="M36 38C24 28 8 36 11 44s10 6 16 4M32 38q-6 8-2 18" stroke="#6f93bd" stroke-width="2" opacity=".8"/>
        </svg>
        <div class="words"><b>野火论坛</b><span>www.proewildfire.cn</span></div>
      </div>`;
  }
}
